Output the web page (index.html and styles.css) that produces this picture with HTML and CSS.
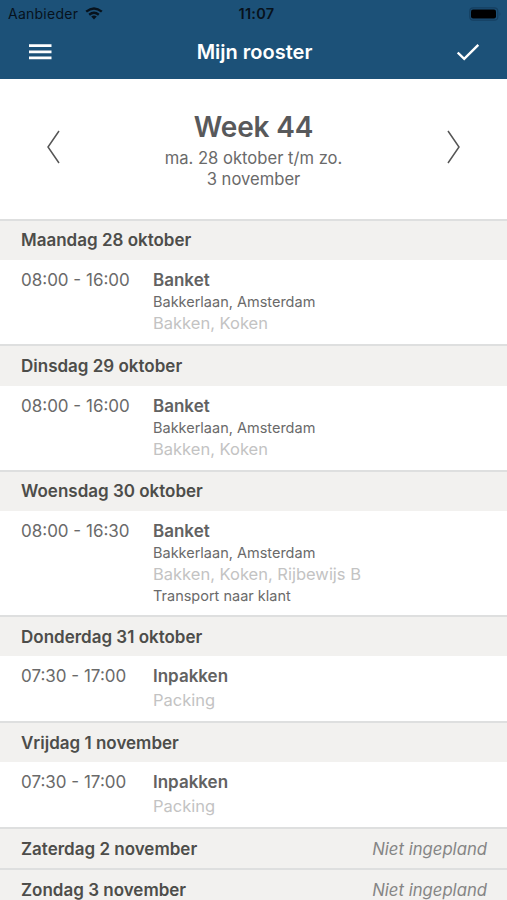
FILE: index.html
```html
<!DOCTYPE html>
<html lang="nl">
<head>
<meta charset="utf-8">
<title>Mijn rooster</title>
<link rel="stylesheet" href="styles.css">
</head>
<body>
<header class="top">
  <div class="status">
    <div class="carrier"><span>Aanbieder</span>
      <svg width="18" height="13" viewBox="0 0 18 13" fill="none" stroke="#07121c" stroke-width="2.4"><path d="M1.2 4.7Q9-1.9 16.8 4.7M4.2 7.8Q9 3.9 13.8 7.8"/><path d="M6.2 9.6Q9 7.5 11.8 9.6L9 12.5Z" fill="#07121c" stroke="none"/></svg>
    </div>
    <span class="clock">11:07</span>
    <svg class="battery" width="33" height="14" viewBox="0 0 33 14"><rect x=".8" y=".8" width="28" height="12.4" rx="3.5" fill="none" stroke="#153f60" stroke-width="1.2"/><rect x="2" y="2.4" width="25" height="9" rx="2" fill="#000"/><path d="M30.7 5v4q1.5-2 0-4" fill="#153f60"/></svg>
  </div>
  <nav class="nav">
    <svg width="23" height="16" viewBox="0 0 23 16" stroke="#fff" stroke-width="2.8"><path d="M0 1.6h22.5M0 7.8h22.5M0 13.9h22.5"/></svg>
    <h1>Mijn rooster</h1>
    <svg width="23" height="18" viewBox="0 0 23 18" fill="none" stroke="#fff" stroke-width="2.4"><path d="M.7 9.6L7.2 15.9L21.3 1.8"/></svg>
  </nav>
</header>
<section class="week">
  <svg width="14" height="34" viewBox="0 0 14 34" fill="none" stroke="#555" stroke-width="1.5"><path d="M13 1L2 17L13 33"/></svg>
  <div class="range">
    <h2>Week 44</h2>
    <p class="r1">ma. 28 oktober t/m zo.</p>
    <p class="r2">3 november</p>
  </div>
  <svg width="14" height="34" viewBox="0 0 14 34" fill="none" stroke="#555" stroke-width="1.5"><path d="M1 1L12 17L1 33"/></svg>
</section>
<main>
  <h3 class="day"><span>Maandag 28 oktober</span></h3>
  <div class="shift"><span class="time">08:00 - 16:00</span><div><p class="dept">Banket</p><p class="place">Bakkerlaan, Amsterdam</p><p class="skills">Bakken, Koken</p></div></div>
  <h3 class="day"><span>Dinsdag 29 oktober</span></h3>
  <div class="shift"><span class="time">08:00 - 16:00</span><div><p class="dept">Banket</p><p class="place">Bakkerlaan, Amsterdam</p><p class="skills">Bakken, Koken</p></div></div>
  <h3 class="day"><span>Woensdag 30 oktober</span></h3>
  <div class="shift"><span class="time">08:00 - 16:30</span><div><p class="dept">Banket</p><p class="place">Bakkerlaan, Amsterdam</p><p class="skills">Bakken, Koken, Rijbewijs B</p><p class="place">Transport naar klant</p></div></div>
  <h3 class="day"><span>Donderdag 31 oktober</span></h3>
  <div class="shift"><span class="time">07:30 - 17:00</span><div><p class="dept">Inpakken</p><p class="skills">Packing</p></div></div>
  <h3 class="day"><span>Vrijdag 1 november</span></h3>
  <div class="shift"><span class="time">07:30 - 17:00</span><div><p class="dept">Inpakken</p><p class="skills">Packing</p></div></div>
  <h3 class="day"><span>Zaterdag 2 november</span><em>Niet ingepland</em></h3>
  <h3 class="day"><span>Zondag 3 november</span><em>Niet ingepland</em></h3>
</main>
</body>
</html>
```
FILE: styles.css
```css
* { box-sizing: border-box; margin: 0; }
body { height: 900px; overflow: hidden; background: #fff; color: #6a6a6a; font-family: Inter, "Liberation Sans", sans-serif; font-size: 17px; white-space: nowrap; }
svg { display: block; flex: none; }
.top { height: 79px; background: #1c5178; }
.status { height: 27px; display: grid; grid-template-columns: 1fr auto 1fr; align-items: center; padding: 0 5px 0 8px; color: #07121c; }
.carrier { display: flex; align-items: center; gap: 7px; font-size: 14px; letter-spacing: .25px; }
.clock { font-size: 14.5px; font-weight: 600; letter-spacing: .3px; padding-left: 3px; }
.battery { justify-self: end; }
.nav { height: 50px; display: flex; align-items: center; justify-content: space-between; padding: 0 27px 0 29px; }
.nav h1 { color: #fff; font-size: 20px; font-weight: 600; }
.week { height: 139.5px; display: flex; justify-content: space-between; padding: 0 46px; }
.week > svg { margin-top: 51px; }
.range { text-align: center; padding-top: 30px; }
.range h2 { font-size: 28px; line-height: 36px; font-weight: 600; color: #58595b; letter-spacing: -.15px; }
.range p { font-size: 16.6px; line-height: 20.5px; }
.range .r1 { margin-top: 3px; }
.day { height: 41.5px; border-top: 2px solid #dedfdf; background: #f2f1ef; display: flex; align-items: center; justify-content: space-between; padding: 0 20px 0 21px; font-size: 17px; line-height: 22px; font-weight: 600; color: #4d4d4a; }
.day em { font-weight: 400; color: #858585; font-size: 16.7px; }
.shift { display: grid; grid-template-columns: 132px 1fr; padding: 9px 20px 9.1px 21px; }
.time, .dept { line-height: 23px; }
.dept { font-weight: 600; color: #626262; }
.place { font-size: 14.5px; line-height: 19.5px; }
.skills { font-size: 16.5px; line-height: 23.5px; color: #c3c3c3; padding-top: .5px; margin-bottom: -.5px; }
```
